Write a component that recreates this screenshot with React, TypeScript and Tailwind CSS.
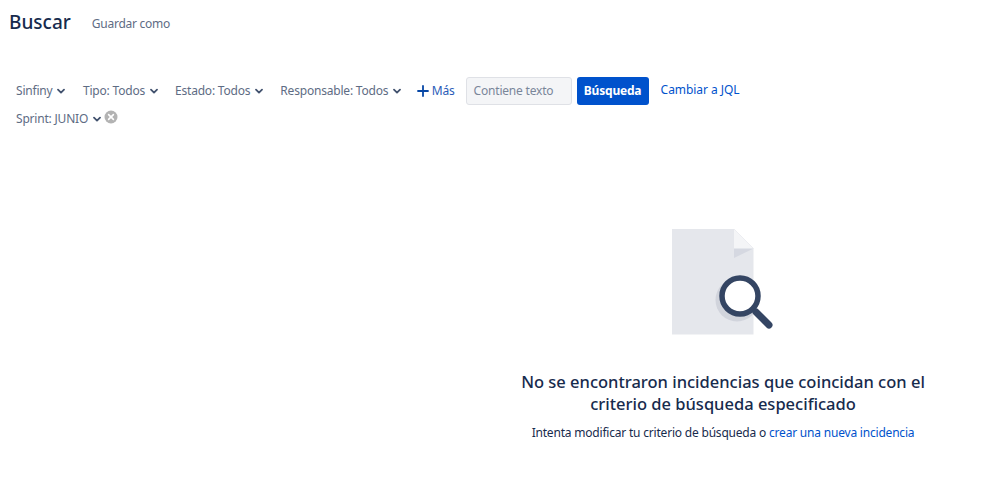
import React from "react";

const font = { fontFamily: '"Noto Sans", sans-serif' };

function Chev() {
  return (
    <svg width="8" height="7" viewBox="0 0 8 7" className="ml-[5px] shrink-0">
      <path d="M1 1.6 L4 4.6 L7 1.6" fill="none" stroke="#42526e" strokeWidth="1.8" strokeLinecap="round" strokeLinejoin="round" />
    </svg>
  );
}

function Filter({ label, cls }: { label: string; cls: string }) {
  return (
    <div className={`flex items-center text-[12px] tracking-[-0.2px] text-[#5e6c84] whitespace-nowrap ${cls}`}>
      {label}
      <Chev />
    </div>
  );
}

export default function App() {
  return (
    <div className="w-[999px] h-[491px] bg-white overflow-hidden font-['Noto_Sans',sans-serif]">
      <div className="flex items-center pl-[9px] pt-[9px] h-[35px]">
        <h1 className="text-[19px] leading-[28px] font-medium text-[#172b4d]">Buscar</h1>
        <span className="ml-[21px] mt-[3px] text-[12px] tracking-[-0.25px] text-[#5e6c84]">Guardar como</span>
      </div>
      <div className="flex items-center pl-[16px] mt-[42px] h-[28px]">
        <Filter label="Sinfiny" cls="mr-[17.5px]" />
        <Filter label="Tipo: Todos" cls="mr-[17px]" />
        <Filter label="Estado: Todos" cls="mr-[17px]" />
        <Filter label="Responsable: Todos" cls="mr-[15.5px]" />
        <div className="flex items-center text-[12px] tracking-[-0.2px] text-[#2a5cb8] mr-[11px]">
          <svg width="12" height="12" viewBox="0 0 12 12" className="mr-[3px]">
            <path d="M6 1v10M1 6h10" stroke="#0747a6" strokeWidth="1.8" strokeLinecap="round" />
          </svg>
          Más
        </div>
        <div className="w-[106px] h-[28px] flex items-center pl-[7px] rounded-[3px] border border-[#dfe1e6] bg-[#f4f5f7] text-[12px] tracking-[-0.2px] text-[#7a869a]">
          Contiene texto
        </div>
        <button className="ml-[5px] w-[72px] h-[28px] rounded-[3px] bg-[#0052cc] text-white text-[12px] tracking-[-0.2px] font-bold">
          Búsqueda
        </button>
        <span className="ml-[12px] -mt-[2px] text-[12px] tracking-[-0.05px] text-[#0052cc]">Cambiar a JQL</span>
      </div>
      <div className="flex items-center pl-[16px] h-[28px]">
        <Filter label="Sprint: JUNIO" cls="" />
        <svg width="14" height="14" viewBox="0 0 14 14" className="ml-[3px] -mt-[4px]">
          <circle cx="7" cy="7" r="6.5" fill="#b3b3b3" />
          <path d="M4.6 4.6l4.8 4.8M9.4 4.6l-4.8 4.8" stroke="#fff" strokeWidth="1.6" strokeLinecap="round" />
        </svg>
      </div>
      <div className="flex">
        <div className="w-[447px] shrink-0" />
        <div className="w-[552px] flex flex-col items-center pt-[96px]" style={font}>
          <svg width="104" height="106" viewBox="0 0 104 106" className="block ml-[2px]">
            <path d="M0 0H62L81.5 19.5V105.5H0Z" fill="#e5e7ec" />
            <path d="M62 0L81.5 19.5L62 29Z" fill="#d5d8e1" />
            <path d="M62 0L81.5 19.5H62Z" fill="#f4f5f7" />
            <circle cx="65" cy="71" r="21.5" fill="#c9ccd6" opacity="0.7" />
            <circle cx="68" cy="67" r="18" fill="#fff" stroke="#344563" strokeWidth="5.5" />
            <path d="M84 83L97 96" stroke="#344563" strokeWidth="7" strokeLinecap="round" />
          </svg>
          <h2 className="mt-[36px] w-[420px] text-center text-[16.5px] leading-[22px] font-medium text-[#172b4d]">
            No se encontraron incidencias que coincidan con el criterio de búsqueda especificado
          </h2>
          <p className="mt-[8px] text-[12px] tracking-[-0.2px] leading-[20px] text-[#172b4d] whitespace-nowrap">
            Intenta modificar tu criterio de búsqueda o <span className="text-[#0052cc]">crear una nueva incidencia</span>
          </p>
        </div>
      </div>
    </div>
  );
}
